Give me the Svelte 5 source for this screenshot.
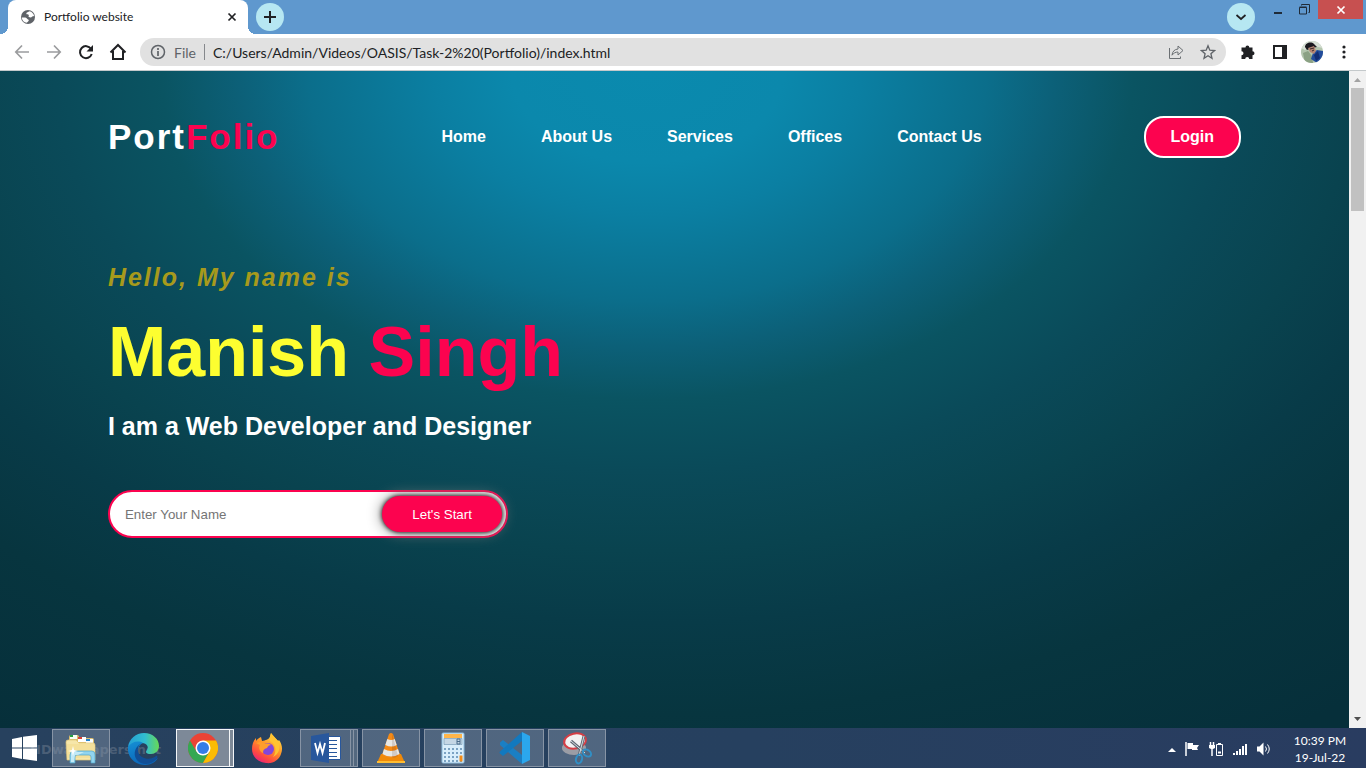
<script>
  const links = ['Home', 'About Us', 'Services', 'Offices', 'Contact Us'];
  const keyRows = [0, 1, 2, 3];
  const keyCols = [0, 1, 2, 3, 4];
  let name = $state('');
</script>

<div class="screen">
  <header class="tabs">
    <div class="tab">
      <svg width="16" height="16" viewBox="0 0 16 16"><circle cx="8" cy="8" r="7" fill="#5f6368" /><path d="M1.800 8.500c1.700.2 3-.2 4.200.3 1.200.4 1 1.400 2 1.600 1 .3 1 1.200.3 1.900l-1.500 1.500C4 13.500 2 11.500 1.800 8.500zM9.500 2.200C8.500 3 6.300 3 6.300 4.500c0 1.300 2 .6 2.500 1.500.4.900-.9 1.300.1 2 1.200.8 2.800.6 3.300-.5l1.900-.6c-.5-2.400-2.200-4.200-4.600-4.700z" fill="#fff" /></svg>
      <span class="tab-title">Portfolio website</span>
      <button class="plain" aria-label="Close tab"><svg width="12" height="12" viewBox="0 0 12 12"><path d="M2.500 2.500l7 7M9.500 2.500l-7 7" stroke="#202124" stroke-width="1.700" /></svg></button>
    </div>
    <button class="round" aria-label="New tab"><svg width="14" height="14" viewBox="0 0 14 14"><path d="M7 1v12M1 7h12" stroke="#202124" stroke-width="2" /></svg></button>
    <span class="grow"></span>
    <button class="round search" aria-label="Search tabs"><svg width="12" height="12" viewBox="0 0 12 12"><path d="M1.500 4l4.500 4 4.500-4" fill="none" stroke="#202124" stroke-width="1.700" /></svg></button>
    <div class="window">
      <button class="win" aria-label="Minimize"><svg width="10" height="12" viewBox="0 0 10 12"><path d="M1 9h8" stroke="#1f2b38" stroke-width="2" /></svg></button>
      <button class="win" aria-label="Restore"><svg width="11" height="11" viewBox="0 0 11 11"><path d="M2.500 1.500V.5h8v8h-1M.5 3.500h7v6.500h-7zM.5 3h7" fill="none" stroke="#1f2b38" /></svg></button>
      <button class="win close" aria-label="Close"><svg width="10" height="10" viewBox="0 0 10 10"><path d="M1.500 1.500l7 7M8.500 1.500l-7 7" stroke="#fff" stroke-width="1.700" /></svg></button>
    </div>
  </header>

  <div class="toolbar">
    <button class="plain tool" aria-label="Back"><svg width="16" height="16" viewBox="0 0 16 16"><path d="M15 8H2M8 1.500L1.800 8 8 14.500" fill="none" stroke="#9b9c9e" stroke-width="1.700" /></svg></button>
    <button class="plain tool" aria-label="Forward"><svg width="16" height="16" viewBox="0 0 16 16"><path d="M1 8h13M8 1.500L14.200 8 8 14.500" fill="none" stroke="#9b9c9e" stroke-width="1.700" /></svg></button>
    <button class="plain tool" aria-label="Reload"><svg width="16" height="16" viewBox="0 0 16 16"><path d="M13 4.800A6 6 0 1 0 13.700 10" fill="none" stroke="#202124" stroke-width="2" /><path d="M15 1v6.500H8.500z" fill="#202124" /></svg></button>
    <button class="plain tool" aria-label="Home page"><svg width="18" height="18" viewBox="0 0 18 18"><path d="M1.500 9.500L9 2l7.500 7.500M4 8v8h10V8" fill="none" stroke="#202124" stroke-width="2" /></svg></button>
    <div class="omnibox">
      <svg width="16" height="16" viewBox="0 0 16 16"><circle cx="8" cy="8" r="6.500" fill="none" stroke="#5f6368" stroke-width="1.500" /><path d="M8 7v5M8 4v2" stroke="#5f6368" stroke-width="1.700" /></svg>
      <span class="scheme">File</span>
      <span class="bar"></span>
      <input class="url" aria-label="Address" value="C:/Users/Admin/Videos/OASIS/Task-2%20(Portfolio)/index.html" />
      <button class="plain" aria-label="Share"><svg width="16" height="16" viewBox="0 0 16 16"><path d="M1.500 4v10.500h11v-2M10 5V2l5 4.500-5 4.500V8C7.500 8 5.700 9 4 11.200 4.400 7.500 6.500 5.300 10 5z" fill="none" stroke="#6b6f73" /></svg></button>
      <button class="plain" aria-label="Bookmark"><svg width="16" height="16" viewBox="0 0 16 16"><path d="M8 1.800l1.800 4.400 4.700.4-3.600 3.100 1.100 4.600L8 11.800l-4 2.500 1.100-4.600L1.500 6.600l4.700-.4z" fill="none" stroke="#5f6368" stroke-width="1.300" /></svg></button>
    </div>
    <button class="plain tool" aria-label="Extensions"><svg width="16" height="16" viewBox="0 0 16 16"><path d="M1.500 3.500h4a1.900 1.900 0 1 1 3.800 0h3.200v3.800a2 2 0 1 1 0 4V15H9.200a2 2 0 1 0-4 0H1.500v-3.700a2 2 0 1 0 0-4z" fill="#202124" /></svg></button>
    <button class="plain tool" aria-label="Side panel"><svg width="14" height="14" viewBox="0 0 14 14"><path d="M1 1h12v12H1z" fill="#fff" stroke="#202124" stroke-width="2" /><path d="M9 1h4v12H9z" fill="#202124" /></svg></button>
    <button class="plain tool" aria-label="Profile">
      <svg width="22" height="22" viewBox="0 0 22 22">
        <defs><clipPath id="face"><circle cx="11" cy="11" r="11" /></clipPath></defs>
        <g clip-path="url(#face)"><path d="M0 0h22v22H0z" fill="#b3c5ad" /><path d="M0 0h22v7L12 5 4 9 0 7z" fill="#d7dfd5" /><path d="M2 12l5-2 4 5 1 7H4z" fill="#8ba184" /><path d="M10 18l2-6 4-3 6 1v10l-6 2z" fill="#224c9c" /><path d="M13 14l4-4 2 7-4 3z" fill="#122e75" /><path d="M4 6c0-4 6-6 9-3l3 3-5 1-5 2z" fill="#1b1920" /><path d="M7 7l6-2 2 5-2 3-4-2z" fill="#b58573" /><path d="M9 8l4-1M11 10l2-1" stroke="#3b2a2c" /></g>
      </svg>
    </button>
    <button class="plain tool" aria-label="Menu"><svg width="16" height="16" viewBox="0 0 16 16" fill="#202124"><circle cx="8" cy="3" r="1.600" /><circle cx="8" cy="8" r="1.600" /><circle cx="8" cy="13" r="1.600" /></svg></button>
  </div>

  <div class="view">
    <main class="page">
      <div class="nav">
        <h2 class="logo">Port<span class="pink">Folio</span></h2>
        <nav class="links">
          {#each links as link}<a href="#top">{link}</a>{/each}
        </nav>
        <a class="login" href="#login">Login</a>
      </div>
      <section class="hero">
        <p class="hello">Hello, My name is</p>
        <h1>Manish <span class="pink">Singh</span></h1>
        <h3>I am a Web Developer and Designer</h3>
        <form onsubmit={(e) => e.preventDefault()}>
          <input type="text" aria-label="Your name" placeholder="Enter Your Name" bind:value={name} />
          <button type="submit">Let's Start</button>
        </form>
      </section>
    </main>
    <div class="scroll">
      <svg width="17" height="17" viewBox="0 0 17 17"><path d="M5 11h7L8.500 7z" fill="#a3a3a3" /></svg>
      <div class="thumb"></div>
      <span class="grow"></span>
      <svg width="17" height="17" viewBox="0 0 17 17"><path d="M5 6h7l-3.500 4z" fill="#505050" /></svg>
    </div>
  </div>

  <footer class="taskbar">
    <span class="mark">HDwallpapers.net</span>
    <button class="start" aria-label="Start"><svg width="28" height="28" viewBox="0 0 28 28" fill="#fff"><path d="M2 5l10-2v10.500H2zM13 2.800L27 1v12.500H13zM2 14.500h10V25L2 23zM13 14.500h14V27l-14-1.900z" /></svg></button>

    <button class="app boxed" aria-label="File Explorer">
      <svg width="34" height="34" viewBox="0 0 34 34"><path d="M5 6q0-2 2-2h7l2 3h12q2 0 2 2v18H5z" fill="#dcbf6d" /><path d="M6 4h7v4H6z" fill="#f7fff4" /><path d="M6 4h3v2H6z" fill="#26a043" /><path d="M14 6h8v5h-8z" fill="#fff" /><path d="M14 6h4v2h-4z" fill="#d74137" /><path d="M22 8h7v4h-7z" fill="#f8fcff" /><path d="M22 8h4v2h-4z" fill="#2683cb" /><path d="M2 11q0-2 2-2h8l3 3h14q2 0 2 2v15H3z" fill="#f6e6a9" stroke="#dfc477" stroke-width=".7" /><path d="M3 13h27v14H3z" fill="#f3dc91" opacity=".6" /><path d="M6 32v-8q0-4 4-4h18q3 0 3 4v8h-4v-6q0-2-2-2H13q-2 0-2 2v6z" fill="#91d4ef" stroke="#52a3c9" stroke-width=".7" /><path d="M7 21h13l-6 3h-3l-1 7H7z" fill="#d9f4fb" opacity=".7" /><path d="M9 15l1 4 4 1-4 1-1 4-1-4-4-1 4-1z" fill="#fff" /></svg>
    </button>

    <button class="app" aria-label="Edge">
      <svg width="33" height="33" viewBox="0 0 33 33">
        <defs><linearGradient id="edge-top"><stop stop-color="#249fd4" /><stop offset=".55" stop-color="#31bdd0" /><stop offset="1" stop-color="#67da55" /></linearGradient><linearGradient id="edge-low" x2=".4" y2="1"><stop stop-color="#1690d4" /><stop offset="1" stop-color="#0965b8" /></linearGradient></defs>
        <path d="M1 15C2 7 9 1 17 1c9 0 15 6 15 13 0 5-4 8-8 8-5 0-6-2-4-4 2-3 0-7-5-7-6 0-11 2-14 4z" fill="url(#edge-top)" />
        <path d="M1 15c3-5 10-7 15-4-5 2-7 9-3 14 4 5 12 5 18 1-3 5-8 7-13 7C8 33 0 25 1 15z" fill="url(#edge-low)" />
        <path d="M15 11c-6 3-5 11 0 14 5 3 10 2 14-1 1-1 2 1 1 2-4 6-11 7-16 5C5 27 6 15 15 11z" fill="#114e95" />
      </svg>
    </button>

    <button class="app stack active" aria-label="Chrome">
      <svg width="30" height="30" viewBox="0 0 30 30"><circle cx="15" cy="15" r="15" fill="#ea4335" /><path d="M2 7.500A15 15 0 0 0 15 30l6.500-11.200L15 15 8.500 18.700z" fill="#34a853" /><path d="M28 7.500H15l6.500 11.200L15 30A15 15 0 0 0 28 7.500z" fill="#fbbc04" /><circle cx="15" cy="15" r="7.500" fill="#fff" /><circle cx="15" cy="15" r="6" fill="#347de8" /></svg>
    </button>

    <button class="app" aria-label="Firefox">
      <svg width="32" height="32" viewBox="0 0 32 32">
        <defs><linearGradient id="fox" x1=".8" x2=".2" y2="1"><stop stop-color="#ffe645" /><stop offset=".45" stop-color="#ff9328" /><stop offset=".75" stop-color="#ff4b40" /><stop offset="1" stop-color="#e51b83" /></linearGradient></defs>
        <path d="M20 1c1 3 5 5 7 8l1-1c3 4 4 9 2 14-2 6-8 10-15 9C6 30 1 24 1 17c0-4 1-8 4-11v3c1-2 3-3 5-4l1 4c4-1 6-1 8-4z" fill="url(#fox)" /><circle cx="17" cy="17" r="6" fill="#8446da" /><path d="M5 11c4-2 7-1 9 1 3-1 5 0 6 1-2 0-3 1-4 3-3 1-4 2-4 5-3-1-5-5-3-8z" fill="#ff9e2d" /><path d="M19 9c6 3 7 11 3 16 6-3 8-9 5-16L20 1c-1 4-2 5-1 8z" fill="#ffc332" />
      </svg>
    </button>

    <button class="app stack three" aria-label="Word">
      <svg width="32" height="32" viewBox="0 0 32 32"><path d="M14 4.500h16.500v23H14z" fill="#fff" stroke="#28579c" /><path d="M19 8.500h8M19 12.500h8M19 16.500h8M19 20.500h8M19 24.500h8" stroke="#28579c" /><path d="M1 4l18-3v30L1 28z" fill="#28579c" /><path d="M5 11l2.500 10L10 12l2.500 9L15 11" fill="none" stroke="#fff" stroke-width="1.800" /></svg>
    </button>

    <button class="app boxed" aria-label="VLC">
      <svg width="28" height="32" viewBox="0 0 28 32"><path d="M4 22h20l4 9H0z" fill="#f18a08" /><path d="M0 29h28v2H0z" fill="#ffbd32" /><path d="M12 2q2-2 4 0l7 21q-9 6-18 0z" fill="#f48a16" /><path d="M10.300 7q4 2 7.400 0l2 6q-5 3-11.400 0zM7 17q7 4 14 0l1.500 5q-8.500 5-17 0z" fill="#e7e7e4" /><path d="M15 1l6 23q-4 3-6 1z" fill="#5a2b12" opacity=".15" /></svg>
    </button>

    <button class="app boxed" aria-label="Calculator">
      <svg width="24" height="32" viewBox="0 0 24 32"><rect x="1" y="1" width="22" height="30" rx="1" fill="#d9eefb" stroke="#8cbbdc" /><path d="M3 2h18v4H3z" fill="#ffb54a" /><path d="M3 6.500h18v6H3z" fill="#c5d7e5" stroke="#7a9db7" stroke-width=".7" /><path d="M16 7h3v5h-3zM16 9.500h3" fill="none" stroke="#4b6c8b" />
        {#each keyRows as row}{#each keyCols as col}<rect x={3 + col * 4} y={16 + row * 4} width="2" height="2" fill="#7ba3c3" />{/each}{/each}
        <path d="M18.500 23.500h3v6h-3z" fill="#f28c19" />
      </svg>
    </button>

    <button class="app boxed" aria-label="VS Code">
      <svg width="34" height="34" viewBox="0 0 34 34"><path d="M2 11.500L5 9l19 15v9L2 14z" fill="#1a7fc4" /><path d="M24 1v9L5 25l-3-2.500q-1-1 0-2z" fill="#1279bf" /><path d="M24 1l8 4v24l-8 4z" fill="#2ba7ed" /></svg>
    </button>

    <button class="app boxed" aria-label="Snipping Tool">
      <svg width="32" height="34" viewBox="0 0 32 34"><ellipse cx="13" cy="17" rx="12" ry="7" fill="#9b9da5" /><ellipse cx="14" cy="10" rx="11" ry="7.500" fill="#f2f2f2" stroke="#d53e45" stroke-width="2" transform="rotate(-12 14 10)" /><path d="M10 10l14 12M23 5l-5 20" stroke="#626a74" stroke-width="3" /><path d="M10 10l14 12M23 5l-5 20" stroke="#d7dfe5" /><ellipse cx="26" cy="22" rx="4.500" ry="3" transform="rotate(35 26 22)" fill="none" stroke="#318fc5" stroke-width="2" /><ellipse cx="18" cy="28" rx="3" ry="4.500" transform="rotate(15 18 28)" fill="none" stroke="#318fc5" stroke-width="2" /></svg>
    </button>

    <span class="grow"></span>
    <div class="tray">
      <svg width="8" height="16" viewBox="0 0 8 16"><path d="M0 11h8L4 7z" fill="#fff" /></svg>
      <svg width="16" height="16" viewBox="0 0 16 16"><path d="M2 1v14" stroke="#fff" stroke-width="1.500" /><path d="M3.500 2H9v2h6l-2 3 1 2H8V8H3.500z" fill="#fff" /></svg>
      <svg width="16" height="16" viewBox="0 0 16 16" fill="none" stroke="#fff"><path d="M2.500 1v3M5.500 1v3M4 7v8" stroke-width="1.500" /><path d="M1 4h6v3L5 8H3L1 7z" fill="#fff" stroke="none" /><path d="M8.500 3.500h6v11h-6zM10 2.500h3" /><path d="M10 11.500h3" stroke-width="2" /></svg>
      <svg width="16" height="16" viewBox="0 0 16 16" fill="#fff"><path d="M1 12h2v2H1zM4 10h2v4H4zM7 8h2v6H7zM10 5h2v9h-2zM13 3h2v11h-2z" /></svg>
      <svg width="16" height="16" viewBox="0 0 16 16"><path d="M1 5.500h2.500l4-4v13l-4-4H1z" fill="#fff" /><path d="M9.500 5.500q2 2.500 0 5M11.500 3.500q3.500 4.500 0 9" fill="none" stroke="#fff" /></svg>
      <div class="clock"><span>10:39 PM</span><span>19-Jul-22</span></div>
    </div>
  </footer>
</div>

<style>
  :global(body) { margin: 0; }
  .screen {
    min-height: 100vh;
    display: grid;
    grid-template-columns: minmax(0, 1fr);
    grid-template-rows: auto auto 1fr auto;
    font-family: 'Segoe UI', Lato, sans-serif;
    color: #202124;
  }
  * { box-sizing: border-box; }
  svg { display: block; flex: none; }
  button { cursor: pointer; }
  .grow { flex: 1; }
  .plain { border: 0; background: none; padding: 0; display: grid; place-items: center; }

  .tabs { display: flex; align-items: center; height: 34px; padding-left: 8px; background: #5f98ce; }
  .tab { display: flex; align-items: center; gap: 8px; width: 240px; height: 34px; padding: 0 10px 0 12px; background: #fff; border-radius: 8px 8px 0 0; position: relative; }
  .tab::before, .tab::after { content: ''; position: absolute; bottom: 0; width: 8px; height: 8px; }
  .tab::before { left: -8px; background: radial-gradient(circle at 0 0, transparent 8px, #fff 8px); }
  .tab::after { right: -8px; background: radial-gradient(circle at 100% 0, transparent 8px, #fff 8px); }
  .tab-title { flex: 1; font-size: 12px; line-height: 16px; }
  .round { display: grid; place-items: center; width: 28px; height: 28px; margin-left: 8px; padding: 0; border: 0; border-radius: 50%; background: #b6e7f2; }
  .search { margin-right: 9px; }
  .window { display: flex; align-self: flex-start; }
  .win { width: 27px; height: 19px; border: 0; padding: 0; background: none; display: grid; place-items: center; }
  .close { width: 45px; margin: 0 3px 0 0; background: #c75050; }

  .toolbar { display: flex; align-items: center; height: 37px; padding: 0 6px; background: #fff; border-bottom: 1px solid #c4c9cb; }
  .tool { width: 32px; height: 32px; }
  .omnibox { flex: 1; display: flex; align-items: center; height: 28px; gap: 8px; margin: 0 6px; padding: 0 6px 0 10px; border-radius: 14px; background: #e1e1e1; font-size: 14px; }
  .scheme { color: #5f6368; }
  .bar { width: 1px; height: 16px; background: #85888c; }
  .url { flex: 1; min-width: 0; border: 0; padding: 0; background: none; font: inherit; color: #202124; }
  .omnibox .plain { width: 24px; }

  .view { display: flex; }
  .page {
    flex: 1;
    min-width: 0;
    padding: 45px 0;
    font-family: Arial, 'Liberation Sans', sans-serif;
    color: #fff;
    background: radial-gradient(ellipse 72% 100% at 48% 0, #0a8aae 0, #0b88ac 14%, #0b7fa2 22%, #0b6e8b 35%, #0c6078 42%, #0a5462 50%, #0a4a59 61%, #09434f 73%, #083b48 84%, #07353f 98%, #062f3a 120%);
  }
  .scroll { width: 17px; display: flex; flex-direction: column; align-items: center; background: #f1f1f1; }
  .thumb { width: 13px; height: 123px; background: #c1c1c1; }

  .nav { display: flex; align-items: center; justify-content: space-between; padding: 0 8%; }
  .logo { margin: 0; font-size: 35px; line-height: 42px; letter-spacing: 2px; }
  .pink { color: #fc034f; }
  .links { display: flex; gap: 55px; }
  a { color: #fff; font-size: 16px; line-height: 18px; font-weight: bold; text-decoration: none; }
  .login { padding: 10px 25px; border: 2px solid #fff; border-radius: 20px; background: #fc034f; }
  .hero { padding: 104px 8% 0; }
  .hello { margin: 0; font-size: 25px; line-height: 30px; font-weight: bold; font-style: italic; letter-spacing: 2px; color: #a79a1c; }
  h1 { margin: 20px 0; font-size: 70px; line-height: 80px; color: #fdfe30; }
  h3 { margin: 0; font-size: 25px; line-height: 28px; }
  form { display: flex; width: 400px; height: 48px; margin-top: 50px; padding: 4px; border: 2px solid #fc034f; border-radius: 24px; background: #fff; }
  form input { flex: 1; min-width: 0; padding: 0 11px; border: 0; outline: 0; background: none; font-family: inherit; }
  form input::placeholder { color: #757575; }
  form button { padding: 0 30px; border: 0; border-radius: 18px; background: #fc034f; color: #fff; font-family: inherit; box-shadow: 0 0 5px #000, 0 0 15px #808080; }

  .taskbar { position: relative; display: flex; align-items: center; gap: 4px; height: 40px; background: linear-gradient(90deg, #27415e, #26405f 55%, #293c60); }
  .mark { position: absolute; left: 30px; top: 13px; font: bold 13px/18px 'DejaVu Sans', sans-serif; color: #4b5f77; }
  .start { position: relative; width: 48px; height: 38px; padding: 0; border: 0; background: none; display: grid; place-items: center; }
  .app { position: relative; width: 58px; height: 38px; padding: 0; border: 0; background: none; display: grid; place-items: center; }
  .boxed, .stack { border: 1px solid #8794a5; background: rgba(132, 148, 168, 0.45); }
  .stack { width: 54px; margin-right: 4px; }
  .stack::after { content: ''; position: absolute; top: -1px; bottom: -1px; right: -5px; width: 3px; border: 1px solid #8794a5; border-left: 0; background: #53687f; }
  .three { width: 51px; margin-right: 7px; }
  .three::after { right: -8px; width: 6px; background: linear-gradient(90deg, #53687f 2px, #8794a5 2px, #8794a5 3px, #53687f 3px); }
  .stack.active { border-color: #f4f6f8; background: #7d8998; }
  .stack.active::after { border-color: #f4f6f8; background: #7d8998; }
  .tray { display: flex; align-items: center; gap: 8px; padding: 2px 6px 0 0; }
  .clock { display: flex; flex-direction: column; width: 80px; text-align: center; font-size: 12px; line-height: 17px; color: #fff; }
</style>
